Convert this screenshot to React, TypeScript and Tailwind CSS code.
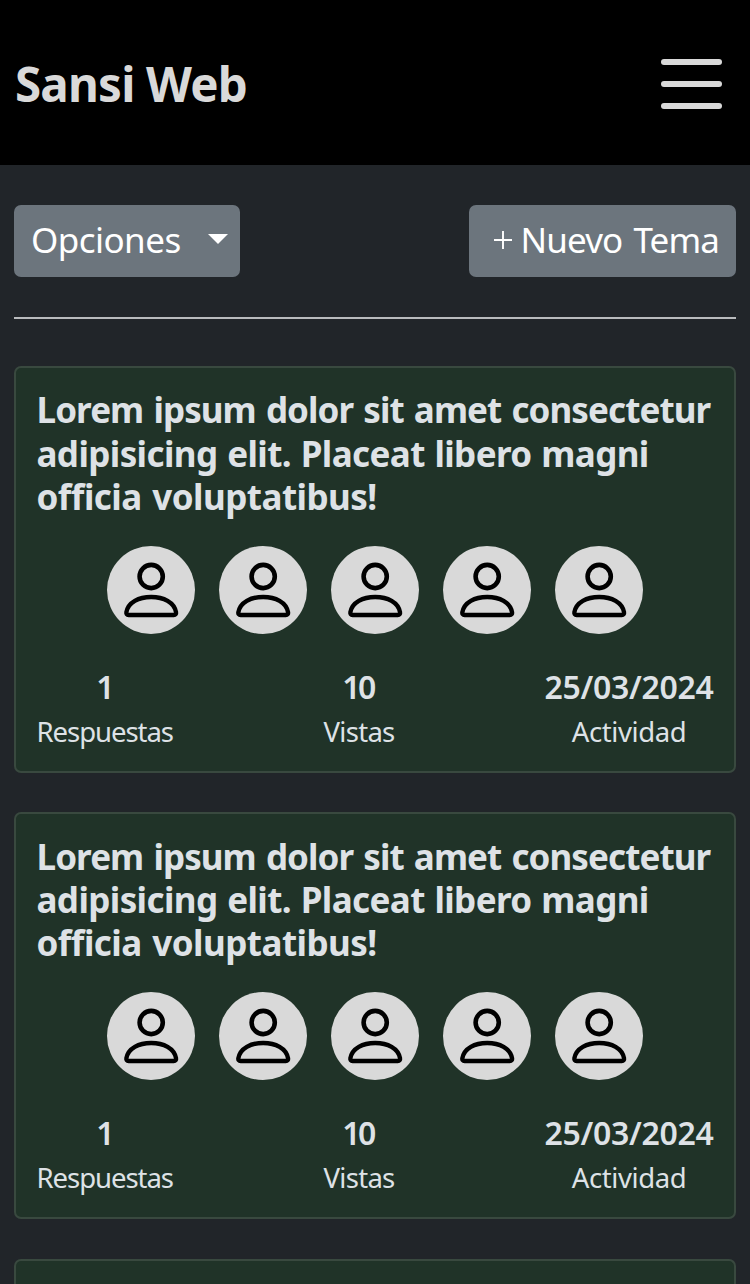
function Avatar() {
  return (
    <svg viewBox="0 0 88 88" className="h-[88px] w-[88px] shrink-0" fill="none">
      <circle cx="44" cy="44" r="44" fill="#d9d9d9" />
      <circle cx="44.2" cy="30.5" r="11.6" stroke="#000" strokeWidth="4.6" />
      <path
        d="M21.6 69h45.2c1.7 0 2.5-1.2 2.2-2.8C67.3 56.1 56.5 51 44.2 51S21.1 56.1 19.4 66.2c-.3 1.6.5 2.8 2.2 2.8Z"
        stroke="#000"
        strokeWidth="4.4"
      />
    </svg>
  );
}

function Card() {
  return (
    <article className="mb-[39.4px] h-[407px] shrink-0 rounded-[7px] border-2 border-[#39493f] bg-[#203328] px-[20.5px] pt-[20.4px] text-[#dee2e6]">
      <h2 className="text-[35px] leading-[43.3px] font-bold whitespace-nowrap">
        <span className="block tracking-[-0.92px] [word-spacing:1.9px]">Lorem ipsum dolor sit amet consectetur</span>
        <span className="block tracking-[-0.6px] [word-spacing:1.2px]">adipisicing elit. Placeat libero magni</span>
        <span className="block tracking-[-0.53px] [word-spacing:2px]">officia voluptatibus!</span>
      </h2>
      <div className="mt-[27.7px] flex justify-center gap-6">
        <Avatar />
        <Avatar />
        <Avatar />
        <Avatar />
        <Avatar />
      </div>
      <div className="mt-[29.8px] flex justify-between text-center whitespace-nowrap">
        <div className="w-[136px]">
          <div className="pl-[2px] text-[32px] leading-[45px] font-semibold">1</div>
          <div className="text-[27.5px] leading-[45px] tracking-[-1.05px]">Respuestas</div>
        </div>
        <div className="w-[72px]">
          <div className="pr-px text-[32px] leading-[45px] font-semibold tracking-[-2.6px]">10</div>
          <div className="pl-px text-[27.5px] leading-[45px] tracking-[-0.7px]">Vistas</div>
        </div>
        <div className="w-[169px]">
          <div className="text-[32px] leading-[45px] font-semibold tracking-[-0.3px]">25/03/2024</div>
          <div className="text-[27.5px] leading-[45px] tracking-[-0.4px]">Actividad</div>
        </div>
      </div>
    </article>
  );
}

export default function App() {
  return (
    <div className="flex h-[1284px] flex-col overflow-hidden bg-[#212529] font-['Noto_Sans','Open_Sans',sans-serif]">
      <header className="flex h-[165px] shrink-0 items-center justify-between bg-black pt-[2px] pr-[28px] pl-[15px] text-[#d9d9d9]">
        <h1 className="text-[47.5px] leading-[72px] font-bold tracking-[-0.8px] whitespace-nowrap">Sansi Web</h1>
        <button aria-label="Menu" className="flex flex-col gap-4">
          <span className="h-1.5 w-[61px] rounded-full bg-[#d9d9d9]" />
          <span className="h-1.5 w-[61px] rounded-full bg-[#d9d9d9]" />
          <span className="h-1.5 w-[61px] rounded-full bg-[#d9d9d9]" />
        </button>
      </header>
      <main className="flex flex-col px-[14px] pt-[40px]">
        <div className="flex shrink-0 justify-between text-[35px] text-white">
          <button className="flex h-[72px] w-[226px] items-center justify-between rounded-[7px] bg-[#6c757d] pr-3 pl-[17px]">
            <span className="pb-0.5 tracking-[-0.55px]">Opciones</span>
            <svg viewBox="0 0 20 10" className="mb-1 h-[10px] w-5" fill="currentColor">
              <path d="M0 0h20L10 10Z" />
            </svg>
          </button>
          <button className="flex h-[72px] w-[267px] items-center justify-between rounded-[7px] bg-[#6c757d] pr-[17px] pl-[25px]">
            <svg viewBox="0 0 18 18" className="mb-0.5 h-[18px] w-[18px] shrink-0" stroke="currentColor" strokeWidth="1.9">
              <path d="M9 0v18M0 9h18" />
            </svg>
            <span className="pb-0.5 tracking-[-0.9px] whitespace-nowrap [word-spacing:3px]">Nuevo Tema</span>
          </button>
        </div>
        <hr className="mt-[40px] mb-[47px] h-[2px] shrink-0 border-0 bg-[#b9bbbd]" />
        <Card />
        <Card />
        <div className="h-[30px] shrink-0 rounded-t-[7px] border-2 border-b-0 border-[#39493f] bg-[#203328]" />
      </main>
    </div>
  );
}
